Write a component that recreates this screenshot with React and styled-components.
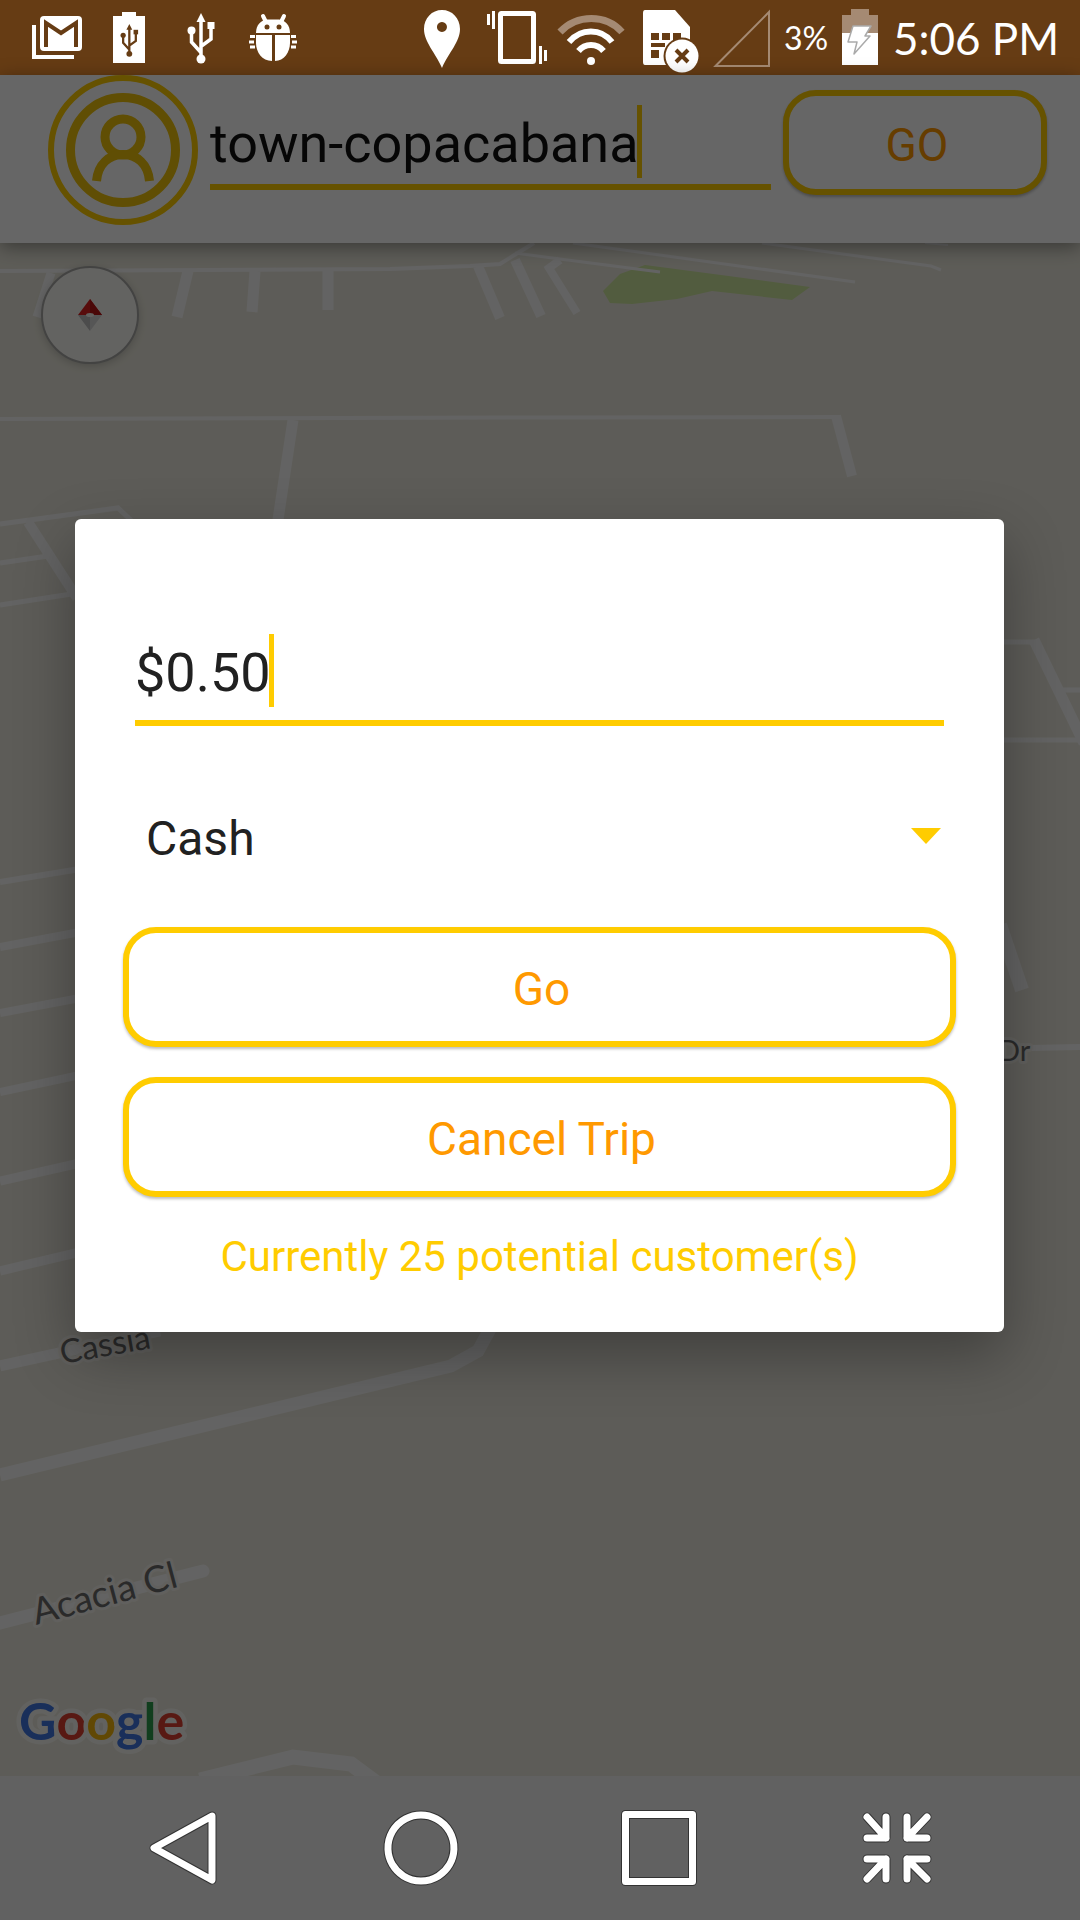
import React, { useState } from "react";
import styled, { createGlobalStyle, css } from "styled-components";

const GlobalStyle = createGlobalStyle`
  *, *::before, *::after { box-sizing: border-box; }
  body { margin: 0; font-family: Roboto, "Noto Sans", sans-serif; }
  button, input, select { font: inherit; }
`;

const YELLOW = "#ffcc00";
const ORANGE = "#ff9900";
const STATUS = "#663c14";

const Screen = styled.div`
  min-height: 100vh;
  display: flex;
  flex-direction: column;
  background: #e9e7db;
`;

/* ---------- status bar ---------- */

const StatusBar = styled.header`
  height: 75px;
  flex: none;
  display: flex;
  align-items: center;
  justify-content: space-between;
  padding: 0 21px;
  background: ${STATUS};
  color: #fff;
  font-family: Lato, "Noto Sans", sans-serif;
`;

const StatusGroup = styled.div`
  display: flex;
  align-items: center;
  height: 100%;
`;

const StatusIcon = styled.svg`
  display: block;
  flex: none;
  height: 75px;
`;

const Percent = styled.span`
  width: 62px;
  padding-left: 4px;
  font-size: 32px;
  line-height: 40px;
`;

const Clock = styled.time`
  padding-left: 15px;
  font-size: 44px;
  line-height: 56px;
  white-space: nowrap;
`;

/* ---------- page ---------- */

const Stage = styled.main`
  flex: 1;
  display: flex;
  flex-direction: column;
  position: relative;
`;

const SearchBar = styled.form`
  display: flex;
  align-items: flex-start;
  gap: 12px;
  padding: 0 33px 18px 48px;
  background: #fff;
  box-shadow: 0 4px 18px rgba(0, 0, 0, 0.4);
  z-index: 1;
`;

const AvatarButton = styled.button`
  width: 150px;
  height: 150px;
  flex: none;
  padding: 0;
  border: 6px solid ${YELLOW};
  border-radius: 50%;
  background: none;
  svg { display: block; width: 100%; height: 100%; }
`;

const Field = styled.label`
  display: flex;
  align-items: flex-start;
  flex: 1;
  min-width: 0;
  border-bottom: 6px solid ${YELLOW};
  color: ${(p) => (p.$dark ? "#111" : "#212121")};
  ${(p) =>
    p.$dark
      ? css`padding: 30px 0 6px;`
      : css`margin: 0 12px; padding-bottom: 13px;`}
`;

const TextInput = styled.input`
  field-sizing: content;
  min-width: 0;
  height: 73px;
  padding: 4px 0 0;
  border: 0;
  outline: 0;
  background: none;
  color: inherit;
  caret-color: transparent;
  font-size: 54px;
  line-height: 68px;
`;

const Caret = styled.span`
  flex: none;
  width: 5px;
  height: 73px;
  margin-left: -2px;
  background: ${YELLOW};
`;

const PillButton = styled.button`
  height: ${(p) => (p.$compact ? "105px" : "120px")};
  padding: 4px 0 0 4px;
  border: 6px solid ${YELLOW};
  border-radius: 33px;
  background: #fff;
  color: ${ORANGE};
  font-size: 46px;
  line-height: 56px;
  box-shadow: 0 2px 3px rgba(0, 0, 0, 0.26);
  ${(p) => p.$compact && css`width: 264px; flex: none; margin-top: 15px;`}
`;

/* ---------- map ---------- */

const MapArea = styled.section`
  flex: 1;
  position: relative;
  overflow: hidden;
  background: #e9e7db;
`;

const MapDrawing = styled.svg`
  position: absolute;
  inset: 0;
  width: 100%;
  height: 100%;
`;

const CompassButton = styled.button`
  position: absolute;
  left: 41px;
  top: 23px;
  width: 98px;
  height: 98px;
  padding: 0;
  border: 2px solid #a8a8a6;
  border-radius: 50%;
  background: #f8f7f3;
  box-shadow: 0 2px 8px rgba(0, 0, 0, 0.2);
  svg { display: block; width: 100%; height: 100%; }
`;

/* ---------- dialog ---------- */

const Scrim = styled.div`
  position: absolute;
  inset: 0;
  z-index: 2;
  display: flex;
  align-items: center;
  padding: 0 76px 0 75px;
  background: rgba(0, 0, 0, 0.6);
`;

const Dialog = styled.div`
  flex: 1;
  display: flex;
  flex-direction: column;
  padding: 115px 48px 46px;
  border-radius: 6px;
  background: #fff;
  box-shadow: 0 22px 60px rgba(0, 0, 0, 0.32);
`;

const SelectWrap = styled.label`
  display: block;
  position: relative;
  margin: 40px 12px 17px;
  &::after {
    content: "";
    position: absolute;
    right: 3px;
    top: 62px;
    border: 15px solid transparent;
    border-top: 16px solid ${YELLOW};
    border-bottom: 0;
    pointer-events: none;
  }
`;

const Select = styled.select`
  display: block;
  width: 100%;
  height: 144px;
  padding: 2px 48px 0 11px;
  border: 0;
  outline: 0;
  appearance: none;
  background: none;
  color: #212121;
  font-size: 48px;
  line-height: 56px;
`;

const Actions = styled.div`
  display: flex;
  flex-direction: column;
  gap: 30px;
`;

const Note = styled.p`
  margin: 31px 0 0;
  color: ${YELLOW};
  font-size: 42px;
  line-height: 58px;
  text-align: center;
`;

/* ---------- navigation bar ---------- */

const NavBar = styled.nav`
  height: 144px;
  flex: none;
  display: flex;
  padding: 0 64px;
  background: #616161;
`;

const NavButton = styled.button`
  flex: 1;
  display: flex;
  align-items: center;
  justify-content: center;
  padding: 0;
  border: 0;
  background: none;
`;

const NavDrawing = styled.svg`
  width: 84px;
  height: 84px;
  overflow: visible;
  fill: none;
  stroke-linejoin: round;
  stroke-linecap: round;
  .edge { stroke: #333; stroke-width: 9; }
  .line { stroke: #fff; stroke-width: 7; }
`;

function NavIcon({ d }) {
  return (
    <NavDrawing viewBox="0 0 84 84" aria-hidden="true">
      <path className="edge" d={d} />
      <path className="line" d={d} />
    </NavDrawing>
  );
}

const NAV = [
  { name: "Back", d: "M71 10 L13 42 L71 74 Z" },
  { name: "Home", d: "M42 9 A33 33 0 1 1 41.9 9 Z" },
  { name: "Recent apps", d: "M8.500 8.500 H75.500 V75.500 H8.500 Z" },
  {
    name: "Exit full screen",
    d: "M12 11 L31 32 M12 32 H31 V11 M72 11 L52 32 M52 11 V32 H72 M12 73 L31 53 M12 53 H31 V73 M72 73 L52 53 M52 73 V53 H72",
  },
];

function UsbGlyph({ color }) {
  return (
    <g fill={color} stroke="none">
      <path d="M200.500 13 L205 22 H196 Z" />
      <circle cx="191" cy="30.500" r="4" />
      <rect x="207" y="22" width="7" height="7" />
      <circle cx="200.500" cy="59" r="4.500" />
      <path
        d="M200.500 20 V58 M191 31 V42 L200 52 M210.500 28 V39 L201 46"
        fill="none"
        stroke={color}
        strokeWidth="3.500"
      />
    </g>
  );
}

function LeftIcons() {
  return (
    <StatusGroup>
      <StatusIcon width="72" viewBox="21 0 72 75" aria-hidden="true">
        <path d="M34 25 V57 H74" fill="none" stroke="#fff" strokeWidth="4" />
        <rect x="40" y="16" width="42" height="35" rx="4" fill="#fff" />
        <path d="M46 47 V23 L61 33 L76 23 V47" fill="none" stroke={STATUS} strokeWidth="4" />
      </StatusIcon>
      <StatusIcon width="72" viewBox="93 0 72 75" aria-hidden="true">
        <path d="M122 12 H136 V16 H145 V63 H113 V16 H122 Z" fill="#fff" />
        <g transform="translate(-1 15.500) scale(.65)">
          <UsbGlyph color={STATUS} />
        </g>
      </StatusIcon>
      <StatusIcon width="72" viewBox="164.500 0 72 75" aria-hidden="true">
        <UsbGlyph color="#fff" />
      </StatusIcon>
      <StatusIcon width="72" viewBox="237 0 72 75" aria-hidden="true">
        <g fill="#fff">
          <path d="M256 33 C256 25 261 20 267 19.500 H279 C285 20 290 25 290 33 Z" />
          <path d="M256 35 H272 V61 C262 61 256 52 256 43 Z" />
          <path d="M275 35 H290 V43 C290 52 284 61 275 61 Z" />
          <path d="M263 16 L266 22 M284 16 L281 22" stroke="#fff" strokeWidth="4" strokeLinecap="round" />
          <path d="M250 36.500 H255 M249 42 H254 M250 47 H255 M291 36.500 H296 M292 42 H297 M291 47 H296" stroke="#fff" strokeWidth="3" />
        </g>
        <circle cx="267" cy="27" r="2.500" fill={STATUS} />
        <circle cx="279" cy="27" r="2.500" fill={STATUS} />
      </StatusIcon>
    </StatusGroup>
  );
}

function RightIcons() {
  return (
    <StatusGroup>
      <StatusIcon width="75" viewBox="404 0 75 75" aria-hidden="true">
        <path
          d="M441 10 C431 10 423 18 423 29 C423 42 434 52 441 68 C448 52 459 42 459 29 C459 18 451 10 441 10 Z M441 22 A5 5 0 1 1 440.900 22 Z"
          fill="#fff"
          fillRule="evenodd"
        />
      </StatusIcon>
      <StatusIcon width="75" viewBox="479 0 75 75" aria-hidden="true">
        <rect x="499.500" y="13.500" width="33" height="48" rx="1" fill="none" stroke="#fff" strokeWidth="5" />
        <path d="M487.500 14 V25 M492.500 11 V29 M539.500 46 V64 M544.500 50 V61" stroke="#fff" strokeWidth="3" />
      </StatusIcon>
      <StatusIcon width="75" viewBox="554 0 75 75" aria-hidden="true">
        <g fill="none" stroke="#fff" strokeWidth="6">
          <path d="M559 32 C576 14 605 14 621 32" stroke="#a58a73" strokeWidth="7" />
          <path d="M568 42 C580 28 600 28 611 42" />
          <path d="M577.500 51 C584 43 596 43 602.500 51" />
        </g>
        <circle cx="590" cy="61" r="4" fill="#fff" />
      </StatusIcon>
      <StatusIcon width="75" viewBox="629 0 75 75" aria-hidden="true">
        <path d="M644 10 H674 L689 27 V65 H644 Q642 65 642 62 V13 Q642 10 644 10 Z" fill="#fff" />
        <path
          d="M650 33 H658 V40 H650 Z M661 33 H669 V40 H661 Z M672 33 H680 V40 H672 Z M650 43 H664 V47 H650 Z M650 50 H658 V58 H650 Z"
          fill={STATUS}
        />
        <circle cx="681" cy="56" r="18.500" fill={STATUS} />
        <circle cx="681" cy="56" r="16.500" fill="#fff" />
        <path d="M675 50 L687 62 M687 50 L675 62" stroke={STATUS} strokeWidth="4" />
      </StatusIcon>
      <StatusIcon width="75" viewBox="704 0 75 75" aria-hidden="true">
        <path d="M714.500 66 L768 12 V66 Z" fill="none" stroke="#a58a73" strokeWidth="2" />
      </StatusIcon>
      <Percent>3%</Percent>
      <StatusIcon width="36" viewBox="841 0 36 75" aria-hidden="true">
        <path d="M850 9 H868 V15 H877 V33 H841 V15 H850 Z" fill="#a58a73" />
        <rect x="841" y="33" width="36" height="32" fill="#fff" />
        <path
          d="M852 26 H870 L864 36 H869 L853 54 L856 42 H847 Z"
          fill="#fff"
          stroke="#aaa"
          strokeWidth="1.500"
          strokeLinejoin="round"
        />
      </StatusIcon>
      <Clock>5:06 PM</Clock>
    </StatusGroup>
  );
}

const ROADS = [
  [4, "M0 28 L390 26 L470 23 L500 21 L516 11 L534 0"],
  [9, "M51 30 L37 74"],
  [11, "M188 28 L177 74"],
  [11, "M255 28 L252 69"],
  [11, "M328 27 L328 67"],
  [10, "M478 23 L500 75"],
  [10, "M515 17 L541 73"],
  [8, "M560 17 L549 25 L577 70"],
  [3, "M515 10 L560 16 L660 29"],
  [3, "M573 0 L855 39"],
  [3, "M762 0 L931 23 L941 27"],
  [2, "M925 0 L948 2"],
  [4, "M0 176 L540 174.500 L841 174"],
  [10, "M836 173 L852 233"],
  [11, "M293 177 L276 290"],
  [5, "M0 281 L118 265 L134 280"],
  [5, "M0 320 L48 313"],
  [5, "M0 362 L78 350"],
  [10, "M28 279 L77 355"],
  [6, "M0 639 L80 626"],
  [8, "M0 704 L80 689"],
  [8, "M0 770 L80 755"],
  [8, "M0 849 L80 832"],
  [9, "M0 938 L80 920"],
  [9, "M0 1028 L80 1009"],
  [11, "M0 1123 L160 1088"],
  [13, "M0 1232 L451 1123 L478 1108 L490 1086"],
  [15, "M200 1537 L293 1514 L351 1521 L378 1541"],
  [5, "M1000 399 L1036 399"],
  [11, "M1034 397 L1084 500"],
  [5, "M1062 447 L1080 447"],
  [5, "M1000 497 L1080 497"],
  [14, "M1000 682 L1022 747"],
  [6, "M1030 805 L1080 804"],
];

const GOOGLE = [
  ["G", "#4076e0"],
  ["o", "#dc4030"],
  ["o", "#f2b50a"],
  ["g", "#4076e0"],
  ["l", "#2c9c4c"],
  ["e", "#dc4030"],
];

function StreetMap() {
  return (
    <MapArea aria-label="Map">
      <MapDrawing viewBox="0 0 1080 1533" preserveAspectRatio="xMinYMin slice">
        <path
          d="M603 48 L620 31 L645 22 L721 32 L810 44 L792 57 L712 48 L677 56 L632 61 L610 60 Z"
          fill="#cde69e"
        />
        <g fill="none" stroke="#f8f8f8">
          {ROADS.map(([w, d]) => (
            <path key={d} d={d} strokeWidth={w} />
          ))}
          <path d="M0 1380 L203 1328" strokeWidth="13" strokeLinecap="round" />
        </g>
        <g
          fill="#6a6a6a"
          stroke="#f2f1ea"
          strokeWidth="6"
          strokeLinejoin="round"
          paintOrder="stroke"
          fontFamily="Lato, 'Noto Sans', sans-serif"
        >
          <text x="62" y="1121" fontSize="33" transform="rotate(-10 62 1121)">Cassia</text>
          <text x="36" y="1382" fontSize="37" transform="rotate(-15 36 1382)">Acacia Cl</text>
          <text x="998" y="818" fontSize="29">Dr</text>
        </g>
        <text
          x="19"
          y="1497"
          fontFamily="Lato, 'Noto Sans', sans-serif"
          fontWeight="700"
          fontSize="52"
          stroke="#f6f5f0"
          strokeWidth="9"
          strokeLinejoin="round"
          paintOrder="stroke"
        >
          {GOOGLE.map(([c, color], i) => (
            <tspan key={i} fill={color}>{c}</tspan>
          ))}
        </text>
      </MapDrawing>
      <CompassButton type="button" aria-label="Reset map rotation">
        <svg viewBox="43 24 94 94">
          <path d="M90 55 L102 71 H78 Z" fill="#dc2020" />
          <path d="M90 55 L102 71 H90 Z" fill="#b81414" />
          <path d="M78 71 H90 V87 Z" fill="#bdbdbd" />
          <path d="M102 71 H90 V87 Z" fill="#d8d8d8" />
          <ellipse cx="90" cy="71" rx="4" ry="2" fill="#f4f4f0" />
        </svg>
      </CompassButton>
    </MapArea>
  );
}

export default function App() {
  const [town, setTown] = useState("town-copacabana");
  const [fare, setFare] = useState("$0.50");

  return (
    <Screen>
      <GlobalStyle />
      <StatusBar>
        <LeftIcons />
        <RightIcons />
      </StatusBar>
      <Stage>
        <SearchBar onSubmit={(e) => e.preventDefault()}>
          <AvatarButton type="button" aria-label="Profile">
            <svg viewBox="54 81 138 138" fill="none" stroke="#f0c30a" strokeWidth="9">
              <circle cx="123" cy="150" r="52.500" />
              <circle cx="123" cy="137" r="18" />
              <path d="M96.500 181 C98 164 109 154.500 123 154.500 C137 154.500 148 164 149.500 181" />
            </svg>
          </AvatarButton>
          <Field $dark>
            <TextInput aria-label="Destination" value={town} onChange={(e) => setTown(e.target.value)} />
            <Caret />
          </Field>
          <PillButton $compact type="submit">GO</PillButton>
        </SearchBar>
        <StreetMap />
        <Scrim>
          <Dialog role="dialog" aria-modal="true" aria-label="Trip">
            <Field>
              <TextInput aria-label="Fare" value={fare} onChange={(e) => setFare(e.target.value)} />
              <Caret />
            </Field>
            <SelectWrap>
              <Select aria-label="Payment method" defaultValue="Cash">
                <option>Cash</option>
              </Select>
            </SelectWrap>
            <Actions>
              <PillButton type="button">Go</PillButton>
              <PillButton type="button">Cancel Trip</PillButton>
            </Actions>
            <Note>Currently 25 potential customer(s)</Note>
          </Dialog>
        </Scrim>
      </Stage>
      <NavBar>
        {NAV.map(({ name, d }) => (
          <NavButton key={name} type="button" aria-label={name}>
            <NavIcon d={d} />
          </NavButton>
        ))}
      </NavBar>
    </Screen>
  );
}
